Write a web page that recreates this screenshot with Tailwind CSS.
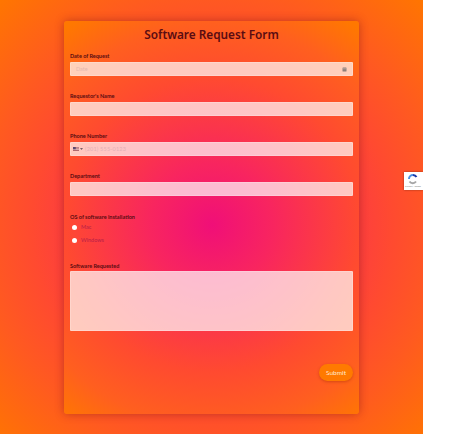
<!DOCTYPE html>
<html lang="en">
<head>
    <meta charset="UTF-8">
    <meta name="viewport" content="width=device-width, initial-scale=1.0">
    <title>Software Request Form</title>
    <script src="https://cdn.jsdelivr.net/npm/@tailwindcss/browser@4"></script>
</head>
<body class="bg-white overflow-hidden font-['Lato',sans-serif]">
    <div class="relative w-[423px] h-[434px] overflow-hidden pt-[21px] bg-[radial-gradient(circle_310px_at_212px_225px,#f00f78_0%,#f8255f_22%,#ff4a30_58%,#ff5a20_74%,#ff7600_100%)]">
        <form class="w-[295px] h-[393px] mx-auto px-[6px] rounded-[3px] shadow-[0_0_10px_rgba(120,20,20,0.45)] bg-[radial-gradient(circle_245px_at_148px_204px,#f00f78_0%,#f8255f_25%,#ff4a30_60%,#ff5f1f_82%,#ff7800_100%)]">
            <h1 class="h-[24px] pt-[4px] text-center font-['Noto_Sans',sans-serif] text-[11.8px] leading-[18px] font-semibold text-[#5a0c12]">Software Request Form</h1>

            <div class="mt-[7px] h-[40px]">
                <label class="block h-[10px] text-[5.5px] leading-[8px] font-bold text-[#5a0c12]">Date of Request</label>
                <div class="flex items-center justify-between h-[14px] px-[5px] rounded-[1px] border border-white/20 bg-white/70">
                    <span class="text-[5.5px] text-[#e6b8ae]">Date</span>
                    <svg class="w-[5px] h-[5px]" viewBox="0 0 10 10"><rect x="1" y="1" width="8" height="8" rx="1" fill="#8f7f78"/><path d="M1 3.5h8" stroke="#d8c8c0" stroke-width="1"/></svg>
                </div>
            </div>

            <div class="h-[40px]">
                <label class="block h-[10px] text-[5.5px] leading-[8px] font-bold text-[#5a0c12]">Requestor's Name</label>
                <div class="h-[14px] rounded-[1px] border border-white/20 bg-white/70"></div>
            </div>

            <div class="h-[40px]">
                <label class="block h-[10px] text-[5.5px] leading-[8px] font-bold text-[#5a0c12]">Phone Number</label>
                <div class="flex items-center gap-[1px] h-[14px] px-[2px] rounded-[1px] border border-white/20 bg-white/70">
                    <svg class="w-[6px] h-[4px]" viewBox="0 0 12 8"><rect width="12" height="8" fill="#b0686e"/><rect y="1.5" width="12" height="1.2" fill="#f2d8d8"/><rect y="4.2" width="12" height="1.2" fill="#f2d8d8"/><rect width="5.5" height="4.5" fill="#5a4a70"/></svg>
                    <svg class="w-[3px] h-[2px] mr-[1px]" viewBox="0 0 6 4"><path d="M0 0h6L3 4z" fill="#7a6068"/></svg>
                    <span class="text-[5.5px] tracking-[0.2px] text-[#e3afb6]">(201) 555-0123</span>
                </div>
            </div>

            <div class="h-[41px]">
                <label class="block h-[10px] text-[5.5px] leading-[8px] font-bold text-[#5a0c12]">Department</label>
                <div class="h-[14px] rounded-[1px] border border-white/20 bg-white/70"></div>
            </div>

            <div class="h-[49px]">
                <label class="block h-[8px] text-[5.5px] leading-[8px] font-bold text-[#5a0c12]">OS of software installation</label>
                <div class="flex items-center gap-[4px] h-[13px] pl-[2px]">
                    <span class="w-[5px] h-[5px] rounded-full bg-white"></span>
                    <span class="text-[5.5px] text-[#b81f48]">Mac</span>
                </div>
                <div class="flex items-center gap-[4px] h-[13px] pl-[2px]">
                    <span class="w-[5px] h-[5px] rounded-full bg-white"></span>
                    <span class="text-[5.5px] text-[#b81f48]">Windows</span>
                </div>
            </div>

            <label class="block h-[9px] text-[5.5px] leading-[8px] font-bold text-[#5a0c12]">Software Requested</label>
            <div class="h-[60px] rounded-[1px] border border-white/20 bg-white/70"></div>

            <div class="flex justify-end mt-[33px]">
                <button type="button" class="w-[34px] h-[17px] rounded-full bg-[#ff7a00] shadow-[0_1px_3px_rgba(150,40,0,0.4)] text-[6.5px] text-[#ffe9d0]">Submit</button>
            </div>
        </form>

        <div class="absolute left-[404px] top-[172px] w-[19px] h-[18px] bg-white shadow-[0_0_2px_rgba(0,0,0,0.4)]">
            <svg class="absolute left-[3px] top-[1px] w-[12px] h-[12px]" viewBox="0 0 24 24" fill="none">
                <path d="M12 4a8 8 0 0 1 7 4" stroke="#1c3aa9" stroke-width="4"/>
                <path d="M4 12a8 8 0 0 1 8-8" stroke="#4a90e2" stroke-width="4"/>
                <path d="M5 17a8 8 0 0 0 13 0" stroke="#a6a6a6" stroke-width="4"/>
            </svg>
            <span class="absolute left-[1px] top-[13px] text-[2.4px] leading-[4px] whitespace-nowrap text-[#777]">Privacy - Terms</span>
        </div>
    </div>
</body>
</html>
